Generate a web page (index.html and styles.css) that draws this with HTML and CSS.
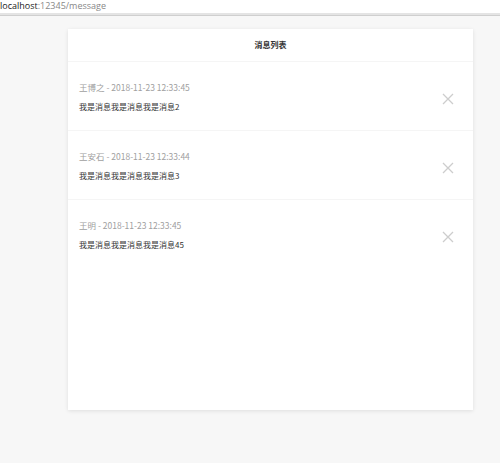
FILE: index.html
```html
<!DOCTYPE html>
<html lang="zh-CN">
<head>
    <meta charset="UTF-8">
    <meta name="viewport" content="width=device-width, initial-scale=1.0">
    <title>消息列表</title>
    <link rel="stylesheet" href="styles.css">
</head>
<body>
    <div class="address-bar">
        <span class="host">localhost</span><span class="path">:12345/message</span>
    </div>

    <main class="page">
        <section class="card">
            <header class="card-header">消息列表</header>

            <ul class="message-list">
                <li class="message">
                    <div class="message-body">
                        <p class="meta">王博之 - 2018-11-23 12:33:45</p>
                        <p class="content">我是消息我是消息我是消息2</p>
                    </div>
                    <button class="close" type="button" aria-label="删除">
                        <svg viewBox="0 0 12 12" width="12" height="12"><path d="M1 1L11 11M11 1L1 11" /></svg>
                    </button>
                </li>
                <li class="message">
                    <div class="message-body">
                        <p class="meta">王安石 - 2018-11-23 12:33:44</p>
                        <p class="content">我是消息我是消息我是消息3</p>
                    </div>
                    <button class="close" type="button" aria-label="删除">
                        <svg viewBox="0 0 12 12" width="12" height="12"><path d="M1 1L11 11M11 1L1 11" /></svg>
                    </button>
                </li>
                <li class="message last">
                    <div class="message-body">
                        <p class="meta">王明 - 2018-11-23 12:33:45</p>
                        <p class="content">我是消息我是消息我是消息45</p>
                    </div>
                    <button class="close" type="button" aria-label="删除">
                        <svg viewBox="0 0 12 12" width="12" height="12"><path d="M1 1L11 11M11 1L1 11" /></svg>
                    </button>
                </li>
            </ul>
        </section>
    </main>
</body>
</html>
```

FILE: styles.css
```css
* {
    box-sizing: border-box;
    margin: 0;
    padding: 0;
}

html, body {
    height: 100%;
}

body {
    font-family: "Noto Sans CJK SC", "Liberation Sans", sans-serif;
    background-color: #f7f7f7;
    color: #333;
    overflow: hidden;
}

.address-bar {
    height: 16px;
    background-color: #fff;
    border-bottom: 1px solid #cfcfcf;
    box-shadow: 0 -2px 0 #e4e4e4 inset;
    font-family: "Open Sans", "Liberation Sans", sans-serif;
    font-size: 9px;
    line-height: 12px;
}

.host {
    color: #222;
}

.path {
    color: #888;
}

.page {
    padding: 13px 0 0 68px;
}

.card {
    width: 405px;
    height: 381px;
    background-color: #fff;
    box-shadow: 0 1px 4px rgba(0, 0, 0, 0.1);
}

.card-header {
    height: 33px;
    line-height: 32px;
    text-align: center;
    font-size: 8px;
    font-weight: 700;
    color: #333;
    border-bottom: 1px solid #f5f5f5;
}

.message-list {
    list-style: none;
}

.message {
    display: flex;
    align-items: center;
    height: 69px;
    padding: 19px 19px 18px 11px;
    border-bottom: 1px solid #f5f5f5;
}

.message.last {
    border-bottom: none;
}

.message-body {
    flex: 1;
}

.meta {
    font-size: 8.5px;
    line-height: 12px;
    color: #a0a0a0;
}

.content {
    margin-top: 8px;
    font-size: 8px;
    line-height: 12px;
    color: #333;
}

.close {
    display: flex;
    margin-top: 4px;
    border: none;
    background: none;
    cursor: pointer;
}

.close svg path {
    stroke: #cdcdcd;
    stroke-width: 1.3;
    fill: none;
}
```
